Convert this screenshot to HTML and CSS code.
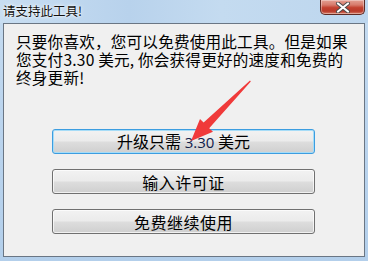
FILE: index.html
```html
<!DOCTYPE html>
<html>
<head>
<meta charset="utf-8">
<link rel="stylesheet" href="styles.css">
</head>
<body>
<div class="window">
  <div class="titlebar">
    <span class="title">请支持此工具!</span>
    <div class="close">
      <svg width="16" height="11" viewBox="0 0 16 11">
        <path d="M3 1.5 L13 9.5 M13 1.5 L3 9.5" stroke="#4a4a4a" stroke-width="4" stroke-linecap="round"/>
        <path d="M3 1.5 L13 9.5 M13 1.5 L3 9.5" stroke="#ffffff" stroke-width="2.2" stroke-linecap="round"/>
      </svg>
    </div>
  </div>
  <div class="client">
    <p class="msg">只要你喜欢，您可以免费使用此工具。但是如果您支付3.30 美元, 你会获得更好的速度和免费的终身更新!</p>
    <div class="buttons">
      <button class="btn default">升级只需 <span class="num">3.30</span> 美元</button>
      <button class="btn">输入许可证</button>
      <button class="btn">免费继续使用</button>
    </div>
  </div>
  <svg class="arrow" width="368" height="261" viewBox="0 0 368 261">
    <polygon points="250,80.5 250.8,81.5 209.2,128.2 213,131.7 191,141 200,119.1 203.6,122.6" fill="#f03a3a"/>
  </svg>
</div>
</body>
</html>
```
FILE: styles.css
```css
html, body {
  margin: 0;
  padding: 0;
}
body {
  width: 368px;
  height: 261px;
  overflow: hidden;
  font-family: "Noto Sans CJK SC", "Noto Sans", sans-serif;
}
.window {
  position: relative;
  width: 368px;
  height: 261px;
  background: linear-gradient(180deg, #c6dcf1 0%, #bcd5ee 40%, #b3cfeb 100%);
  display: flex;
  flex-direction: column;
}
.titlebar {
  height: 23px;
  display: flex;
  align-items: flex-start;
  justify-content: space-between;
  background: linear-gradient(90deg, #c8def2 0%, #b8d2ec 35%, #c4dbf0 60%, #bdd6ee 100%);
}
.title {
  font-size: 12.5px;
  line-height: 22px;
  margin-left: 3px;
  color: #111111;
  text-shadow: 0 0 4px #ffffff, 0 0 2px #ffffff;
}
.close {
  width: 45px;
  height: 15px;
  margin-right: 3px;
  box-sizing: border-box;
  border: 1px solid #5e2a24;
  border-top: none;
  border-radius: 0 0 5px 5px;
  background: linear-gradient(180deg, #e4a093 0%, #d77b6c 35%, #c3412f 55%, #b93a2b 80%, #d8806a 100%);
  display: flex;
  align-items: center;
  justify-content: center;
  box-shadow: inset 0 0 0 1px rgba(255,255,255,0.35);
}
.client {
  margin: 0 3px 4px 3px;
  flex: 1;
  background: #f0f0f0;
  border: 1px solid #6a7684;
  display: flex;
  flex-direction: column;
}
.msg {
  margin: 8px 12px 0 12px;
  font-size: 15.6px;
  line-height: 18px;
  color: #000;
  letter-spacing: 0.2px;
}
.buttons {
  margin: 43px 0 0 48px;
  display: flex;
  flex-direction: column;
  gap: 15px;
}
.btn {
  width: 263px;
  height: 25px;
  padding: 0;
  box-sizing: border-box;
  border: 1px solid #707070;
  border-radius: 3px;
  background: linear-gradient(180deg, #f2f2f2 0%, #ebebeb 48%, #dddddd 52%, #cfcfcf 100%);
  font-family: "Noto Sans CJK SC", "Noto Sans", sans-serif;
  font-size: 16px;
  line-height: 22px;
  color: #000;
  letter-spacing: 0.5px;
  box-shadow: inset 0 0 0 1px rgba(255,255,255,0.7);
}
.btn.default {
  border-color: #3c9de0;
  box-shadow: inset 0 0 0 1px #a6dcf7;
  letter-spacing: 0;
  word-spacing: 0;
}
.num {
  font-family: "Open Sans", "Noto Sans", sans-serif;
  font-size: 15px;
  color: #10204a;
}
.arrow {
  position: absolute;
  left: 0;
  top: 0;
  pointer-events: none;
}
```
